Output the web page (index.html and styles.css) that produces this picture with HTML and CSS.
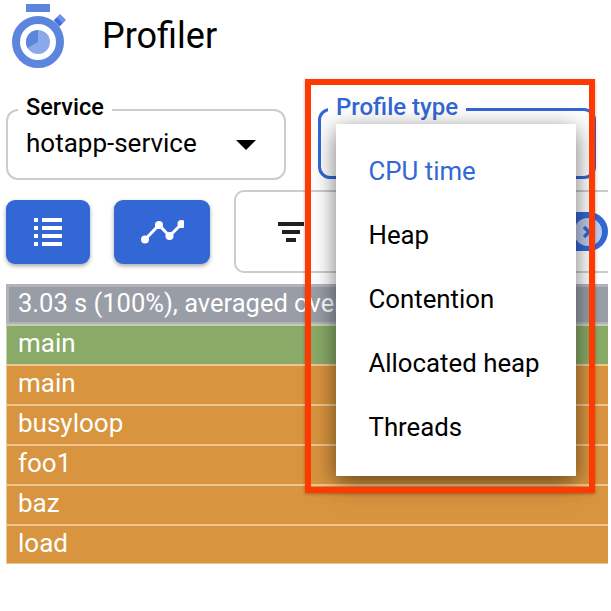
FILE: index.html
```html
<!DOCTYPE html>
<html lang="en">
<head>
<meta charset="utf-8">
<title>Profiler</title>
<link rel="stylesheet" href="styles.css">
</head>
<body>
<div class="page">
  <header class="header">
    <svg class="logo" width="66" height="70" viewBox="0 0 66 70">
      <rect x="26" y="4" width="24" height="8" fill="#5c85de"/>
      <path d="M60 14l6 6-6.500 6.500-6-6z" fill="#6d92e6"/>
      <path d="M57 17.500l5.500 5.500-3 3.500-5.500-6z" fill="#3f6fdc"/>
      <circle cx="38" cy="42" r="22" fill="none" stroke="#5c85de" stroke-width="8"/>
      <circle cx="38" cy="42" r="12" fill="#8aa8ea"/>
      <path d="M38 42V30a12 12 0 0 0-10.400 18z" fill="#5c85de"/>
    </svg>
    <h1 class="title">Profiler</h1>
  </header>

  <div class="controls">
    <div class="field field-service">
      <span class="field-label">Service</span>
      <span class="field-value">hotapp-service</span>
      <span class="caret"></span>
    </div>
    <div class="field field-active">
      <span class="field-label">Profile type</span>
    </div>
  </div>

  <div class="toolbar">
    <button class="tool tool-list" type="button" aria-label="List view">
      <svg width="28" height="28" viewBox="0 0 28 28" fill="#fff">
        <rect x="0" y="0" width="4" height="4"/><rect x="8" y="0" width="20" height="4"/>
        <rect x="0" y="8" width="4" height="4"/><rect x="8" y="8" width="20" height="4"/>
        <rect x="0" y="16" width="4" height="4"/><rect x="8" y="16" width="20" height="4"/>
        <rect x="0" y="24" width="4" height="4"/><rect x="8" y="24" width="20" height="4"/>
      </svg>
    </button>
    <button class="tool tool-chart" type="button" aria-label="Chart view">
      <svg width="44" height="24" viewBox="0 0 44 24" fill="#fff">
        <path d="M5 19.500 19 5 29.500 16 41.500 4" fill="none" stroke="#fff" stroke-width="3"/>
        <circle cx="5" cy="19.500" r="4"/><circle cx="19" cy="5" r="4"/><circle cx="29.500" cy="16" r="4"/><circle cx="41.500" cy="4" r="4"/>
      </svg>
    </button>
    <div class="filter">
      <svg class="filter-icon" width="26" height="20" viewBox="0 0 26 20" fill="#212121">
        <rect x="0" y="0" width="26" height="4"/><rect x="4" y="8" width="18" height="4"/><rect x="8" y="16" width="10" height="4"/>
      </svg>
      <span class="chip">
        <svg width="32" height="39" viewBox="0 0 32 39">
          <circle cx="12" cy="20" r="14" fill="#bccbea"/>
          <path d="M8 15l10 10M18 15 8 25" stroke="#3367d6" stroke-width="3.500" fill="none"/>
        </svg>
      </span>
    </div>
  </div>

  <div class="flame">
    <div class="frame frame-root">3.03 s (100%), averaged over</div>
    <div class="frame frame-green">main</div>
    <div class="frame frame-orange">main</div>
    <div class="frame frame-orange">busyloop</div>
    <div class="frame frame-orange">foo1</div>
    <div class="frame frame-orange">baz</div>
    <div class="frame frame-orange">load</div>
  </div>

  <ul class="menu">
    <li class="menu-item menu-item-selected">CPU time</li>
    <li class="menu-item">Heap</li>
    <li class="menu-item">Contention</li>
    <li class="menu-item">Allocated heap</li>
    <li class="menu-item">Threads</li>
  </ul>
  <div class="highlight"></div>
</div>
</body>
</html>
```
FILE: styles.css
```css
* { box-sizing: border-box; }
html, body { margin: 0; background: #fff; }
.page {
  position: relative;
  width: 608px;
  height: 611px;
  overflow: hidden;
  font-family: Roboto, "Liberation Sans", sans-serif;
  color: #000;
}
.header {
  display: flex;
  align-items: flex-start;
  height: 108px;
}
.logo { flex: none; margin-right: 37px; }
.title {
  margin: 15px 0 0 -1px;
  font-size: 36px;
  line-height: 42px;
  font-weight: 400;
}
.controls {
  display: flex;
  gap: 32px;
  padding-left: 6px;
  align-items: flex-start;
}
.field {
  position: relative;
  height: 71px;
  border-radius: 12px;
  display: flex;
  align-items: center;
}
.field-service {
  width: 280px;
  margin-top: 1px;
  border: 2px solid #ccc;
  padding: 0 18px 4px;
  justify-content: space-between;
}
.field-active {
  width: 278px;
  border: 3px solid #3367d6;
}
.field-label {
  position: absolute;
  top: -18px;
  background: #fff;
  padding: 0 8px;
  font-size: 23.500px;
  line-height: 28px;
  font-weight: 500;
}
.field-service .field-label { left: 10px; }
.field-active .field-label { left: 7px; color: #3367d6; font-size: 24px; }
.field-value { font-size: 26px; line-height: 32px; }
.caret {
  width: 0;
  height: 0;
  margin: 4px 10px 0 0;
  border-left: 10px solid transparent;
  border-right: 10px solid transparent;
  border-top: 10px solid #000;
}
.toolbar {
  display: flex;
  align-items: flex-start;
  height: 83px;
  margin-top: 10px;
  padding-left: 6px;
}
.tool {
  flex: none;
  height: 64px;
  margin-top: 10px;
  padding: 0;
  border: 0;
  border-radius: 9px;
  background: #3367d6;
  box-shadow: 0 2px 4px rgba(0, 0, 0, .35);
  display: flex;
  align-items: center;
  justify-content: center;
}
.tool-list { width: 84px; margin-right: 24px; }
.tool-chart { width: 96px; margin-right: 24px; }
.filter {
  flex: none;
  width: 400px;
  height: 83px;
  border: 2px solid #ccc;
  border-radius: 10px;
  display: flex;
  align-items: center;
  padding-left: 42px;
}
.filter-icon { flex: none; }
.chip {
  margin-left: 272px;
  width: 32px;
  height: 39px;
  flex: none;
  background: #3367d6;
  border-radius: 0 20px 20px 0;
  display: block;
}
.chip svg { display: block; }
.flame { margin: 11px 0 0 6px; }
.frame {
  height: 40px;
  padding-left: 11px;
  color: #fff;
  font-size: 26px;
  line-height: 34px;
  border-left: 1px solid;
  border-top: 2px solid;
  white-space: nowrap;
}
.frame-root {
  background: #989da6;
  border: solid #b0b4ba;
  border-width: 3px 0 2px 3px;
  padding-left: 9px;
  line-height: 33px;
  font-size: 25.500px;
}
.frame-green { background: #8aaa68; border-color: #c3d0b0; }
.frame-orange { background: #d8943e; border-color: #efc592; }
.frame:last-child { border-bottom: 1px solid #efc592; }
.menu {
  position: absolute;
  left: 336px;
  top: 124px;
  width: 240px;
  height: 352px;
  margin: 0;
  padding: 16px 0;
  list-style: none;
  background: #fff;
  box-shadow: 0 6px 22px rgba(0, 0, 0, .55);
}
.menu-item {
  height: 64px;
  padding-left: 32.500px;
  font-size: 25.800px;
  line-height: 62px;
}
.menu-item-selected { color: #3367d6; }
.highlight {
  position: absolute;
  left: 305px;
  top: 79px;
  width: 290px;
  height: 414px;
  border: 6px solid #ff3a00;
  box-shadow: 0 1px 3px rgba(0, 0, 0, .3);
}
```
